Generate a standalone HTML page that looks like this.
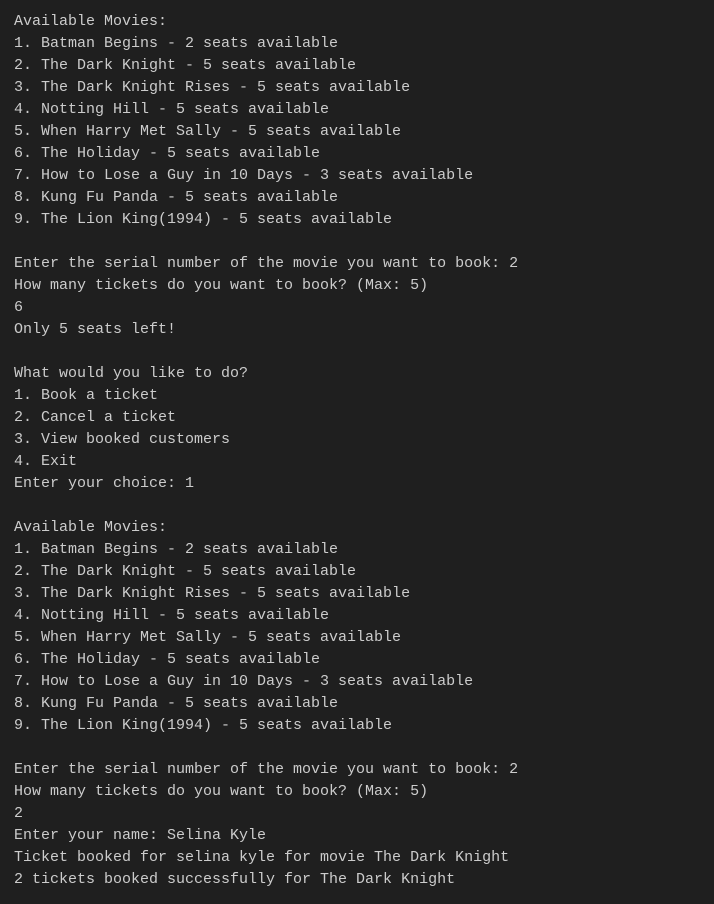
<!DOCTYPE html>
<html><head><meta charset="utf-8"><style>
html,body{margin:0;padding:0;background:#1f1f1f;width:714px;height:904px;overflow:hidden}
pre{margin:0;padding:11px 0 0 14px;font-family:"Liberation Mono",monospace;font-size:15px;line-height:22px;color:#cccccc}
</style></head><body><pre>Available Movies:
1. Batman Begins - 2 seats available
2. The Dark Knight - 5 seats available
3. The Dark Knight Rises - 5 seats available
4. Notting Hill - 5 seats available
5. When Harry Met Sally - 5 seats available
6. The Holiday - 5 seats available
7. How to Lose a Guy in 10 Days - 3 seats available
8. Kung Fu Panda - 5 seats available
9. The Lion King(1994) - 5 seats available

Enter the serial number of the movie you want to book: 2
How many tickets do you want to book? (Max: 5)
6
Only 5 seats left!

What would you like to do?
1. Book a ticket
2. Cancel a ticket
3. View booked customers
4. Exit
Enter your choice: 1

Available Movies:
1. Batman Begins - 2 seats available
2. The Dark Knight - 5 seats available
3. The Dark Knight Rises - 5 seats available
4. Notting Hill - 5 seats available
5. When Harry Met Sally - 5 seats available
6. The Holiday - 5 seats available
7. How to Lose a Guy in 10 Days - 3 seats available
8. Kung Fu Panda - 5 seats available
9. The Lion King(1994) - 5 seats available

Enter the serial number of the movie you want to book: 2
How many tickets do you want to book? (Max: 5)
2
Enter your name: Selina Kyle
Ticket booked for selina kyle for movie The Dark Knight
2 tickets booked successfully for The Dark Knight</pre></body></html>
